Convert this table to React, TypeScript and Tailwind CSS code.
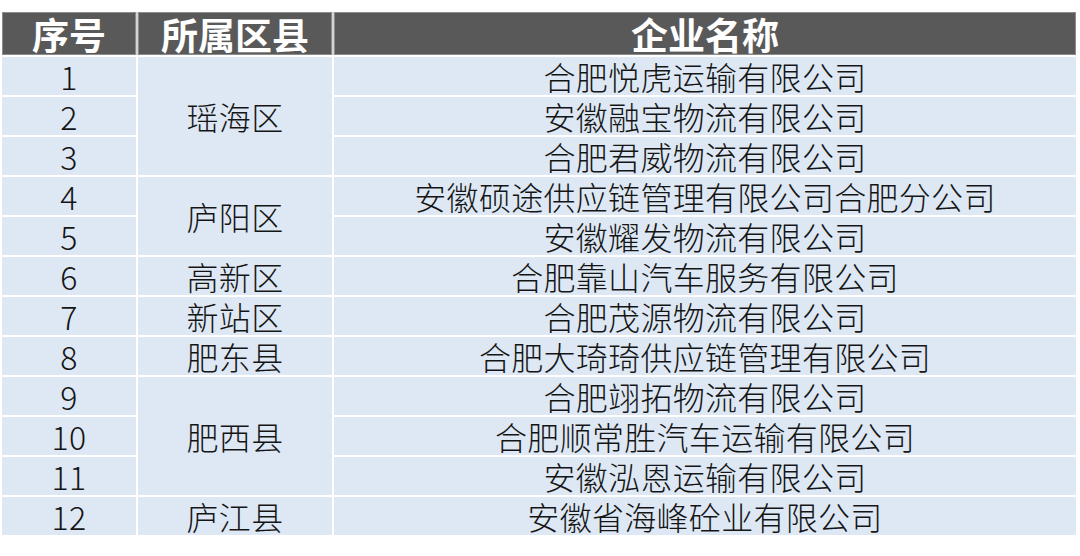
import React from "react";

// Rows of the company list, grouped by district
const groups = [
  { district: "瑶海区", companies: ["合肥悦虎运输有限公司", "安徽融宝物流有限公司", "合肥君威物流有限公司"] },
  { district: "庐阳区", companies: ["安徽硕途供应链管理有限公司合肥分公司", "安徽耀发物流有限公司"] },
  { district: "高新区", companies: ["合肥靠山汽车服务有限公司"] },
  { district: "新站区", companies: ["合肥茂源物流有限公司"] },
  { district: "肥东县", companies: ["合肥大琦琦供应链管理有限公司"] },
  { district: "肥西县", companies: ["合肥翊拓物流有限公司", "合肥顺常胜汽车运输有限公司", "安徽泓恩运输有限公司"] },
  { district: "庐江县", companies: ["安徽省海峰砼业有限公司"] },
];

const cell =
  "flex items-center justify-center bg-[#dde8f4] pb-[1px] text-[32px] font-light leading-[34px] tracking-[0.3px] text-[#151515]";

const head =
  "flex items-center justify-center border border-[#8c8c8c] bg-[#595959] text-[37px] font-bold leading-[40px] text-white";

export default function App() {
  let n = 0;
  const cells: React.ReactNode[] = [];
  groups.forEach((g, gi) => {
    g.companies.forEach((c, ci) => {
      n += 1;
      cells.push(
        <div key={`n${n}`} className={cell} style={{ gridColumn: 1, gridRow: n }}>
          {n}
        </div>
      );
      if (ci === 0) {
        cells.push(
          <div
            key={`d${gi}`}
            className={cell}
            style={{ gridColumn: 2, gridRow: `${n} / span ${g.companies.length}` }}
          >
            {g.district}
          </div>
        );
      }
      cells.push(
        <div key={`c${n}`} className={cell} style={{ gridColumn: 3, gridRow: n }}>
          {c}
        </div>
      );
    });
  });

  return (
    <div
      className="h-[556px] w-[1080px] bg-white pl-[2px] pt-[12px]"
      style={{ fontFamily: '"Noto Sans CJK SC", "Noto Sans", sans-serif' }}
    >
      {/* Header */}
      <div className="grid h-[43px] w-[1074px] grid-cols-[134px_194px_742px] gap-x-[2px] bg-[#d4d4d4]">
        <div className={head}>序号</div>
        <div className={head}>所属区县</div>
        <div className={head}>企业名称</div>
      </div>
      {/* Body */}
      <div className="mt-[2px] grid w-[1074px] grid-cols-[134px_194px_742px] auto-rows-[38px] gap-[2px] bg-white">
        {cells}
      </div>
    </div>
  );
}
